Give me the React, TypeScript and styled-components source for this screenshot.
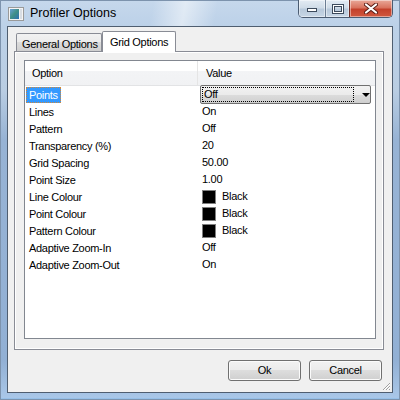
import React from 'react';
import styled, { createGlobalStyle } from 'styled-components';

const GlobalStyle = createGlobalStyle`
    html, body {
        margin: 0;
        padding: 0;
    }
    body {
        width: 400px;
        height: 400px;
        overflow: hidden;
        font-family: "Liberation Sans", Arial, sans-serif;
    }
`;

const Frame = styled.div`
    width: 400px;
    height: 400px;
    box-sizing: border-box;
    padding: 0 7px 7px;
    display: flex;
    flex-direction: column;
    background:
        linear-gradient(100deg, rgba(255,255,255,0) 38%, rgba(255,255,255,0.5) 46%, rgba(255,255,255,0) 54%) top / 100% 26px no-repeat,
        linear-gradient(to bottom, #c6d8ec 0px, #bcd1e8 26px, #b9cde2 90px, #97b3d4 140px, #92b0d4 360px, #a9c7e8 398px, #5fa9e6 400px);
    box-shadow: inset 0 0 0 1px #7d93ad;
`;

const TitleBar = styled.div`
    height: 26px;
    display: flex;
    align-items: flex-start;
`;

const AppIcon = styled.svg`
    margin: 7px 0 0 1px;
    flex: none;
`;

const Title = styled.div`
    margin: 5px 0 0 6px;
    font-size: 12.5px;
    line-height: 16px;
    color: #000;
`;

const CaptionGroup = styled.div`
    margin-left: auto;
    display: flex;
    height: 18px;
    border: 1px solid #4b5c72;
    border-top: none;
    border-radius: 0 0 5px 5px;
    overflow: hidden;
    box-sizing: border-box;
`;

const CaptionButton = styled.div<{ $w: number; $close?: boolean }>`
    width: ${(p) => p.$w}px;
    height: 100%;
    display: flex;
    align-items: center;
    justify-content: center;
    box-sizing: border-box;
    border-left: ${(p) => (p.$close ? '1px solid #6e2a22' : '1px solid #6b7d93')};
    box-shadow: inset 0 0 0 1px rgba(255, 255, 255, 0.45);
    background: ${(p) =>
        p.$close
            ? 'linear-gradient(to bottom, #e9a899 0%, #d9735f 45%, #c3402b 55%, #d0583f 100%)'
            : 'linear-gradient(to bottom, #e3ebf3 0%, #d0dce8 45%, #b8c9db 55%, #c8d7e6 100%)'};
    &:first-child {
        border-left: none;
    }
`;

const Client = styled.div`
    flex: 1;
    position: relative;
    border: 1px solid #4f5e70;
    background: #f0f0f0;
    display: flex;
    flex-direction: column;
    padding-top: 4px;
`;

const TabStrip = styled.div`
    display: flex;
    align-items: flex-end;
    height: 20px;
    margin-left: 8px;
    position: relative;
    z-index: 1;
`;

const Tab = styled.div<{ $active?: boolean }>`
    box-sizing: border-box;
    height: ${(p) => (p.$active ? 21 : 18)}px;
    margin-bottom: ${(p) => (p.$active ? -1 : 0)}px;
    width: ${(p) => (p.$active ? 74 : 86)}px;
    padding: ${(p) => (p.$active ? '3px 0 0 7px' : '3px 0 0 5px')};
    border: 1px solid #898c95;
    border-bottom: none;
    border-left: ${(p) => (p.$active ? '1px solid #898c95' : '1px solid #898c95')};
    border-radius: 2px 2px 0 0;
    font-size: 11px;
    letter-spacing: -0.3px;
    line-height: 14px;
    color: #000;
    background: ${(p) =>
        p.$active
            ? '#ffffff'
            : 'linear-gradient(to bottom, #f2f2f2 0%, #ebebeb 50%, #dddddd 50%, #cfcfcf 100%)'};
`;

const TabPage = styled.div`
    margin-left: 6px;
    width: 370px;
    height: 299px;
    box-sizing: border-box;
    border: 1px solid #898c95;
    box-shadow: inset 0 0 0 1px #ffffff;
    background: #f0f0f0;
    padding: 8px 7px 10px 9px;
`;

const ListView = styled.div`
    width: 352px;
    height: 279px;
    box-sizing: border-box;
    border: 1px solid #828790;
    background: #ffffff;
    font-size: 11px;
    letter-spacing: -0.3px;
    color: #000;
`;

const Header = styled.div`
    display: grid;
    grid-template-columns: 173px 1fr;
    height: 25px;
    box-sizing: border-box;
    border-bottom: 1px solid #e2e3e5;
    background: linear-gradient(to bottom, #ffffff 0%, #ffffff 40%, #f3f4f6 40%, #f1f2f4 100%);
`;

const HeaderCell = styled.div<{ $divider?: boolean }>`
    line-height: 24px;
    padding-left: ${(p) => (p.$divider ? 7 : 8)}px;
    border-right: ${(p) => (p.$divider ? '1px solid #e5e5e5' : 'none')};
`;

const Row = styled.div`
    display: grid;
    grid-template-columns: 173px 1fr;
    height: 17px;
    line-height: 17px;
`;

const NameCell = styled.div`
    padding-left: 1px;
    display: flex;
    align-items: flex-start;
`;

const NameText = styled.span<{ $selected?: boolean }>`
    display: inline-block;
    margin-top: 1px;
    height: 16px;
    line-height: 15px;
    padding: 0 2px;
    border: 1px ${(p) => (p.$selected ? 'dotted #d0883a' : 'solid transparent')};
    box-sizing: border-box;
    background: ${(p) => (p.$selected ? '#3399ff' : 'transparent')};
    color: ${(p) => (p.$selected ? '#ffffff' : '#000000')};
    white-space: nowrap;
`;

const ValueCell = styled.div`
    padding-left: 4px;
    display: flex;
    align-items: center;
    white-space: nowrap;
`;

const Combo = styled.div`
    margin: -1px 0 0 -2px;
    width: 171px;
    height: 19px;
    box-sizing: border-box;
    border: 1px solid #707070;
    border-radius: 2px;
    background: linear-gradient(to bottom, #f2f2f2 0%, #ebebeb 50%, #dddddd 50%, #cfcfcf 100%);
    display: flex;
    align-items: center;
    padding: 0 0 0 1px;
    position: relative;
    z-index: 1;
`;

const ComboFocus = styled.div`
    width: 152px;
    height: 15px;
    box-sizing: border-box;
    border: 1px dotted #000;
    line-height: 13px;
    padding-left: 1px;
`;

const ComboArrow = styled.div`
    margin-left: 8px;
    width: 0;
    height: 0;
    border-left: 4px solid transparent;
    border-right: 4px solid transparent;
    border-top: 4px solid #000;
`;

const Swatch = styled.span<{ $color: string }>`
    display: inline-block;
    width: 14px;
    height: 14px;
    box-sizing: border-box;
    border: 1px solid #808080;
    background: ${(p) => p.$color};
    margin-right: 6px;
`;

const ButtonRow = styled.div`
    display: flex;
    justify-content: flex-end;
    gap: 8px;
    margin-top: 10px;
    padding-right: 10px;
`;

const Button = styled.div`
    width: 73px;
    height: 21px;
    box-sizing: border-box;
    border: 1px solid #707070;
    border-radius: 3px;
    box-shadow: inset 0 0 0 1px #fbfbfb;
    background: linear-gradient(to bottom, #f2f2f2 0%, #ebebeb 50%, #dddddd 50%, #cfcfcf 100%);
    font-size: 11px;
    letter-spacing: -0.3px;
    line-height: 19px;
    text-align: center;
    color: #000;
`;

const Grip = styled.svg`
    position: absolute;
    right: 1px;
    bottom: 1px;
`;

interface Option {
    name: string;
    value: string;
    color?: string;
}

const options: Option[] = [
    { name: 'Points', value: 'Off' },
    { name: 'Lines', value: 'On' },
    { name: 'Pattern', value: 'Off' },
    { name: 'Transparency (%)', value: '20' },
    { name: 'Grid Spacing', value: '50.00' },
    { name: 'Point Size', value: '1.00' },
    { name: 'Line Colour', value: 'Black', color: '#000000' },
    { name: 'Point Colour', value: 'Black', color: '#000000' },
    { name: 'Pattern Colour', value: 'Black', color: '#000000' },
    { name: 'Adaptive Zoom-In', value: 'Off' },
    { name: 'Adaptive Zoom-Out', value: 'On' },
];

const App = () => {
    return (
        <>
            <GlobalStyle />
            <Frame>
                <TitleBar>
                    <AppIcon width="16" height="14" viewBox="0 0 16 14">
                        <rect x="0.5" y="0.5" width="15" height="13" fill="#f4f4f4" stroke="#9a9a9a" />
                        <defs>
                            <linearGradient id="pic" x1="0" y1="0" x2="1" y2="1">
                                <stop offset="0" stopColor="#6aa0d8" />
                                <stop offset="0.5" stopColor="#3f8f86" />
                                <stop offset="1" stopColor="#2d6fb5" />
                            </linearGradient>
                        </defs>
                        <rect x="2" y="2" width="9" height="10" fill="url(#pic)" />
                        <rect x="12" y="2" width="2" height="10" fill="#d8dde3" />
                    </AppIcon>
                    <Title>Profiler Options</Title>
                    <CaptionGroup>
                        <CaptionButton $w={26}>
                            <svg width="12" height="6" viewBox="0 0 12 6">
                                <rect x="1.5" y="2.5" width="9" height="3" fill="#fff" stroke="#3c4a5c" />
                            </svg>
                        </CaptionButton>
                        <CaptionButton $w={24}>
                            <svg width="12" height="10" viewBox="0 0 12 10">
                                <rect x="1.5" y="1.5" width="9" height="7" fill="none" stroke="#3c4a5c" strokeWidth="3" />
                                <rect x="1.5" y="1.5" width="9" height="7" fill="none" stroke="#fff" strokeWidth="1" />
                            </svg>
                        </CaptionButton>
                        <CaptionButton $w={43} $close>
                            <svg width="14" height="11" viewBox="0 0 14 11">
                                <path d="M2 1.5 L12 9.5 M12 1.5 L2 9.5" stroke="#5a1d16" strokeWidth="4" strokeLinecap="round" />
                                <path d="M2 1.5 L12 9.5 M12 1.5 L2 9.5" stroke="#fff" strokeWidth="2.2" strokeLinecap="round" />
                            </svg>
                        </CaptionButton>
                    </CaptionGroup>
                </TitleBar>
                <Client>
                    <TabStrip>
                        <Tab>General Options</Tab>
                        <Tab $active>Grid Options</Tab>
                    </TabStrip>
                    <TabPage>
                        <ListView>
                            <Header>
                                <HeaderCell $divider>Option</HeaderCell>
                                <HeaderCell>Value</HeaderCell>
                            </Header>
                            {options.map((opt, i) => (
                                <Row key={opt.name}>
                                    <NameCell>
                                        <NameText $selected={i === 0}>{opt.name}</NameText>
                                    </NameCell>
                                    <ValueCell>
                                        {i === 0 ? (
                                            <Combo>
                                                <ComboFocus>{opt.value}</ComboFocus>
                                                <ComboArrow />
                                            </Combo>
                                        ) : (
                                            <>
                                                {opt.color && <Swatch $color={opt.color} />}
                                                {opt.value}
                                            </>
                                        )}
                                    </ValueCell>
                                </Row>
                            ))}
                        </ListView>
                    </TabPage>
                    <ButtonRow>
                        <Button>Ok</Button>
                        <Button>Cancel</Button>
                    </ButtonRow>
                    <Grip width="11" height="11" viewBox="0 0 11 11">
                        <path d="M10 3 L3 10 M10 6 L6 10 M10 9 L9 10" stroke="#a0a0a0" strokeWidth="1" />
                        <path d="M10 4 L4 10 M10 7 L7 10" stroke="#ffffff" strokeWidth="1" />
                    </Grip>
                </Client>
            </Frame>
        </>
    );
};

export default App;
